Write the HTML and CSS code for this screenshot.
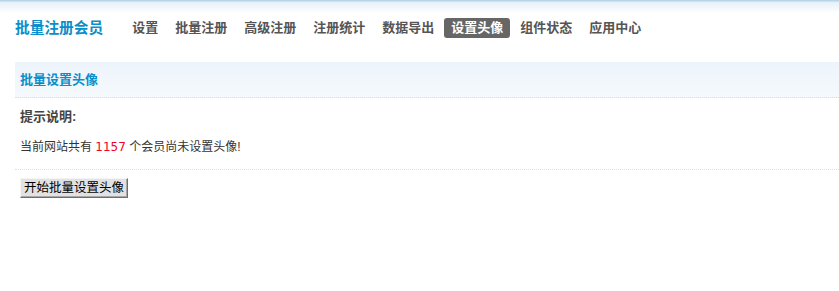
FILE: index.html
```html
<!DOCTYPE html>
<html lang="zh-CN">
<head>
<meta charset="utf-8">
<title>批量注册会员</title>
<link rel="stylesheet" href="styles.css">
</head>
<body>
<div class="top">
  <div class="logo">批量注册会员</div>
  <ul class="nav">
    <li><a href="#">设置</a></li>
    <li><a href="#">批量注册</a></li>
    <li><a href="#">高级注册</a></li>
    <li><a href="#">注册统计</a></li>
    <li><a href="#">数据导出</a></li>
    <li><a href="#" class="on">设置头像</a></li>
    <li><a href="#">组件状态</a></li>
    <li><a href="#">应用中心</a></li>
  </ul>
</div>
<div class="main">
  <div class="panel-head">批量设置头像</div>
  <div class="tips">
    <h3 class="tips-title">提示说明:</h3>
    <p class="tips-text">当前网站共有 <span class="num">1157</span> 个会员尚未设置头像!</p>
  </div>
  <div class="actions">
    <button class="btn" type="button">开始批量设置头像</button>
  </div>
</div>
</body>
</html>
```
FILE: styles.css
```css
html, body {
  margin: 0;
  padding: 0;
  background: #fff;
  font-family: "Liberation Sans", "Noto Sans CJK SC", sans-serif;
  font-size: 12px;
  color: #333;
}
.top {
  height: 58px;
  box-sizing: border-box;
  padding: 18px 0 0 15px;
  display: flex;
  align-items: flex-start;
  background: linear-gradient(to bottom, #b7d5e6 0, #b7d5e6 1px, #e4f0f8 2px, #ffffff 13px);
}
.logo {
  font-size: 14.7px;
  font-weight: bold;
  color: #0b8ec9;
  line-height: 20px;
  height: 20px;
  margin-right: 22px;
  white-space: nowrap;
}
.nav {
  list-style: none;
  margin: 0;
  padding: 0;
  display: flex;
}
.nav li {
  margin-right: 3px;
}
.nav a {
  display: block;
  padding: 0 7px;
  height: 20px;
  line-height: 20px;
  font-size: 13px;
  font-weight: bold;
  color: #555;
  text-decoration: none;
  border-radius: 3px;
  white-space: nowrap;
}
.nav a.on {
  background: #666;
  color: #fff;
}
.main {
  margin-top: 4px;
  padding-left: 15px;
}
.panel-head {
  height: 35px;
  line-height: 35px;
  padding-left: 5px;
  background: linear-gradient(to bottom, #edf4fb, #f5f9fd);
  border-bottom: 1px dotted #cfe0ee;
  font-size: 13px;
  font-weight: bold;
  color: #0b8ec9;
}
.tips {
  padding: 9px 5px 14px;
  border-bottom: 1px dotted #d3e3f0;
}
.tips-title {
  margin: 0;
  font-size: 13px;
  font-weight: bold;
  color: #444;
  line-height: 20px;
}
.tips-text {
  margin: 12px 0 0;
  line-height: 16px;
  color: #333;
}
.num {
  font-family: "DejaVu Sans", sans-serif;
  color: #f5002a;
}
.actions {
  padding: 8px 5px;
}
.btn {
  font-family: "Liberation Sans", "Noto Sans CJK SC", sans-serif;
  font-size: 12.5px;
  color: #000;
  background: #e2e2e2;
  height: 20px;
  width: 108px;
  padding: 0;
  line-height: 17px;
  border: 1px solid;
  border-color: #f4f4f4 #6e6e6e #6e6e6e #f4f4f4;
  box-shadow: inset -1px -1px 0 #a8a8a8;
}
```
